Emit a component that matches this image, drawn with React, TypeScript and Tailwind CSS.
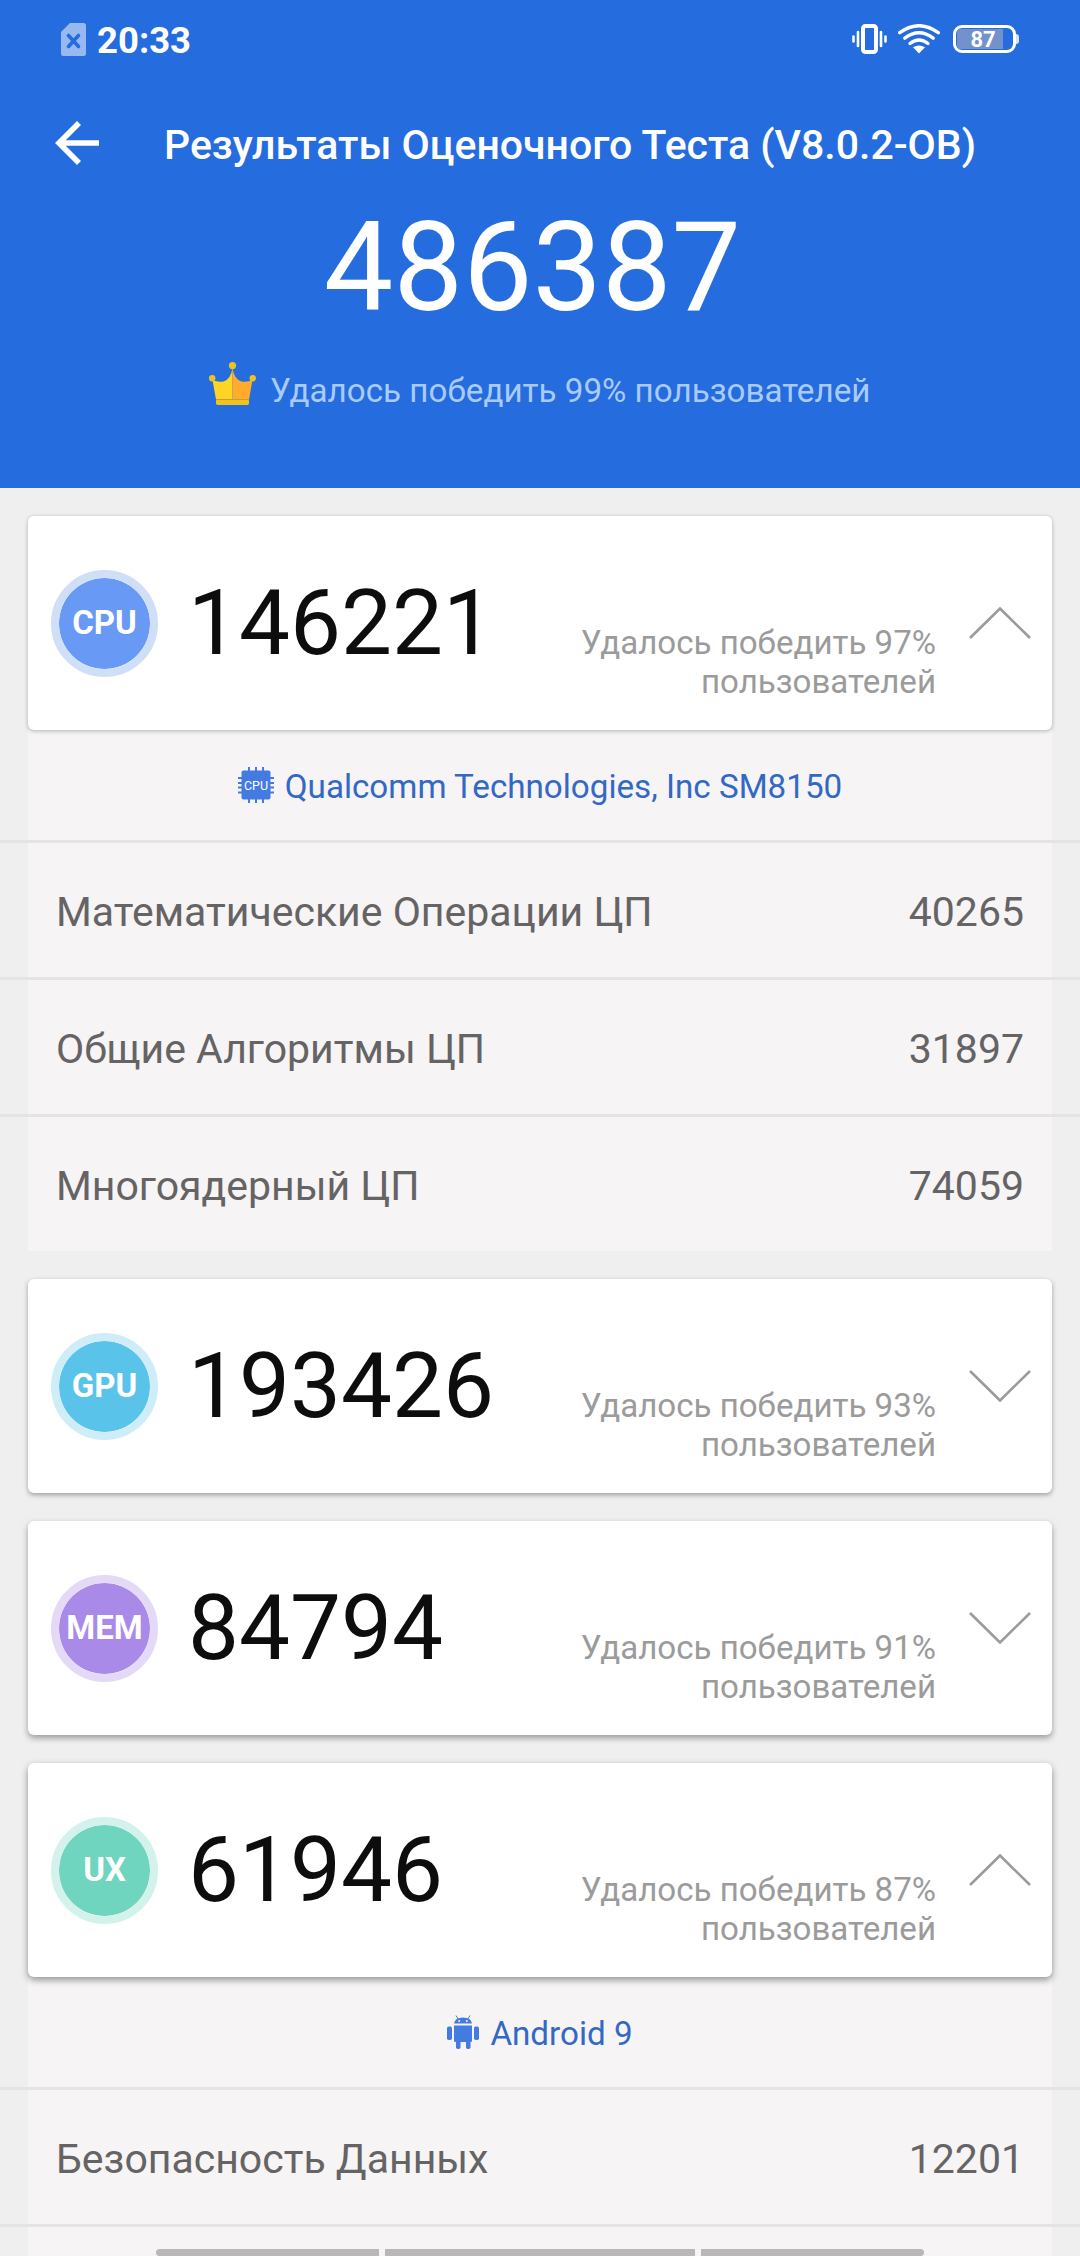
import React from "react";
import clsx from "clsx";

type Section = {
  name: string;
  score: string;
  percent: number;
  open: boolean;
  badge: string;
  shadow: string;
  device?: { icon: React.ReactNode; label: string };
  rows?: { label: string; value: string }[];
};

const sections: Section[] = [
  {
    name: "CPU",
    score: "146221",
    percent: 97,
    open: true,
    badge: "bg-[#6799f5] border-[#d0dff8]",
    shadow: "shadow-[0_1px_4px_rgba(0,0,0,0.28)]",
    device: { icon: <ChipIcon />, label: "Qualcomm Technologies, Inc SM8150" },
    rows: [
      { label: "Математические Операции ЦП", value: "40265" },
      { label: "Общие Алгоритмы ЦП", value: "31897" },
      { label: "Многоядерный ЦП", value: "74059" },
    ],
  },
  {
    name: "GPU",
    score: "193426",
    percent: 93,
    open: false,
    badge: "bg-[#5ac3ea] border-[#ceedf8]",
    shadow: "shadow-[0_2px_5px_rgba(0,0,0,0.34)]",
  },
  {
    name: "MEM",
    score: "84794",
    percent: 91,
    open: false,
    badge: "bg-[#a98ae8] border-[#e4daf8]",
    shadow: "shadow-[0_3px_6px_rgba(0,0,0,0.36)]",
  },
  {
    name: "UX",
    score: "61946",
    percent: 87,
    open: true,
    badge: "bg-[#6fd5be] border-[#d3f2eb]",
    shadow: "shadow-[0_3px_7px_rgba(0,0,0,0.4)]",
    device: { icon: <AndroidIcon />, label: "Android 9" },
    rows: [
      { label: "Безопасность Данных", value: "12201" },
      { label: "", value: "" },
    ],
  },
];

export default function App() {
  return (
    <div className="relative h-[2256px] w-[1080px] overflow-hidden bg-[#efefef] font-['Roboto',sans-serif]">
      <header className="h-[488px] bg-[#256cdf] text-white">
        <StatusBar />

        <div className="flex h-[130px] items-center pl-[55px]">
          <svg className="h-11 w-11 shrink-0" viewBox="0 0 44 44" fill="none" stroke="white" strokeWidth="5.6">
            <path d="M44 22H4M24 2L4 22l20 20" />
          </svg>
          <h1 className="ml-[65px] pt-1 text-[41px] leading-[48px] font-medium whitespace-nowrap">
            Результаты Оценочного Теста (V8.0.2-OB)
          </h1>
        </div>

        <div className="-ml-[15px] pt-[2px] text-center text-[123.75px] leading-[116px]">486387</div>

        <div className="mt-[36px] flex items-start pl-[209px]">
          <CrownIcon />
          <p className="ml-[14px] pt-[9px] text-[33.2px] leading-[39px] whitespace-nowrap text-[#a9cbfb]">
            Удалось победить 99% пользователей
          </p>
        </div>
      </header>

      <main className="flex flex-col gap-7 pt-7">
        {sections.map((s) => (
          <section key={s.name}>
            <ScoreCard section={s} />
            {s.device && (
              <div className="bg-[linear-gradient(to_right,transparent_28px,#f6f4f5_28px,#f6f4f5_1052px,transparent_1052px)]">
                <div className="flex h-[110px] items-center justify-center text-[33.2px] leading-[39px] text-[#3369c4]">
                  {s.device.icon}
                  <span className="ml-[11px] pt-[3px] whitespace-nowrap">{s.device.label}</span>
                </div>
                {s.rows?.map((row, i) => (
                  <div
                    key={i}
                    className="flex h-[137px] items-center justify-between border-t-[3px] border-[#e5e4e4] px-14 pt-1 text-[41px] leading-[48px] text-[#656364]"
                  >
                    <span>{row.label}</span>
                    <span>{row.value}</span>
                  </div>
                ))}
              </div>
            )}
          </section>
        ))}
      </main>

      {/* gesture bar */}
      <div className="absolute bottom-0 left-[156px] flex h-[7px] w-[768px] gap-[6px]">
        <span className="w-[223px] rounded-l-[4px] bg-[#b8b8b8]" />
        <span className="w-[310px] bg-[#b8b8b8]" />
        <span className="w-[223px] rounded-r-[4px] bg-[#b8b8b8]" />
      </div>
    </div>
  );
}

function ScoreCard({ section }: { section: Section }) {
  return (
    <div className={clsx("relative mx-7 flex h-[214px] items-center rounded-[6px] bg-white", section.shadow)}>
      <div
        className={clsx(
          "ml-[23px] flex h-[107px] w-[107px] shrink-0 items-center justify-center rounded-full border-8 bg-clip-padding text-[33px] font-bold text-white",
          section.badge
        )}
      >
        {section.name}
      </div>
      <div className="ml-[30px] text-[90.75px] leading-[106px] text-[#0d0d0d]">{section.score}</div>
      <p className="mt-[77px] ml-auto text-right text-[33.1px] leading-[39px] text-[#9b9b9b]">
        Удалось победить {section.percent}%
        <br />
        пользователей
      </p>
      <svg
        className={clsx("mr-[21px] ml-[33px] h-8 w-[62px]", !section.open && "rotate-180")}
        viewBox="0 0 62 32"
        fill="none"
        stroke="#9b9b9b"
        strokeWidth="2.6"
      >
        <path d="M1 31L31 1.5L61 31" />
      </svg>
    </div>
  );
}

function StatusBar() {
  return (
    <div className="flex h-[78px] items-center pr-[61px] pl-[61px]">
      {/* no SIM */}
      <svg className="h-[33px] w-[25px]" viewBox="0 0 25 33">
        <path d="M9 0H22.5Q25 0 25 2.5V30.5Q25 33 22.5 33H2.5Q0 33 0 30.5V9Z" fill="#98b9f0" />
        <path d="M7.5 12.5l10 11M17.5 12.5l-10 11" stroke="#256cdf" strokeWidth="3.6" strokeLinecap="round" />
      </svg>
      <span className="ml-[11px] pt-[3px] text-[36.5px] leading-[42px] font-bold">20:33</span>

      <div className="ml-auto flex items-center">
        {/* vibrate */}
        <svg className="h-[30px] w-[35px]" viewBox="0 0 35 30" fill="none" stroke="white">
          <rect x="11" y="2" width="13" height="26" rx="2.5" strokeWidth="4" />
          <path d="M6 8v14M29 8v14" strokeWidth="2.6" strokeLinecap="round" />
          <path d="M1.5 12.5v5M33.5 12.5v5" strokeWidth="2.6" strokeLinecap="round" />
        </svg>
        {/* wifi */}
        <svg className="ml-[11px] h-[30px] w-[42px]" viewBox="0 0 42 30" fill="none" stroke="white" strokeWidth="3.4" strokeLinecap="round">
          <path d="M1.7 8.7Q21-5.3 40.3 8.7" />
          <path d="M6.8 14.2Q21 3.3 35.2 14.2" />
          <path d="M12 19.5Q21 12.5 30 19.5" />
          <path d="M15 23.2Q21 19.6 27 23.2L21 29.6Z" fill="white" stroke="none" />
        </svg>
        {/* battery */}
        <div className="ml-[13px] flex items-center">
          <div className="relative flex h-7 w-[63px] items-center justify-center rounded-[9px] border-[3px] border-white">
            <div className="absolute top-[1px] bottom-[1px] left-[1px] w-[46px] rounded-l-[4px] bg-[#7391cb]" />
            <span className="relative -ml-[3px] pt-[2px] text-[22px] leading-[22px] font-bold">87</span>
          </div>
          <div className="h-[10px] w-[3px] rounded-r-[3px] bg-[#d5e3fa]" />
        </div>
      </div>
    </div>
  );
}

function CrownIcon() {
  return (
    <svg className="h-[43px] w-[47px] shrink-0" viewBox="0 0 47 43">
      <path d="M3.5 18Q9 20.500 14.500 19.500Q22 17 23.500 6V37.500H7Z" fill="#ffd524" />
      <path d="M43.5 18Q38 20.500 32.500 19.500Q25 17 23.500 6V37.500H40Z" fill="#ffab2b" />
      <rect x="7" y="37" width="33" height="6" rx="1.8" fill="#f0c41b" />
      <path d="M7 37.5H40" stroke="#c9a02c" strokeWidth="1" />
      <circle cx="23.5" cy="3.6" r="3.6" fill="#efc31f" />
      <circle cx="3.2" cy="16.3" r="3.2" fill="#efc31f" />
      <circle cx="43.8" cy="16.3" r="3.2" fill="#efc31f" />
    </svg>
  );
}

function ChipIcon() {
  return (
    <svg className="h-9 w-9" viewBox="0 0 36 36">
      <rect x="3.5" y="3.5" width="29" height="29" rx="2" fill="#447be0" />
      <path d="M11 0v36M18 0v36M25 0v36M0 11h36M0 16h36M0 20.5h36M0 25.5h36" stroke="#447be0" strokeWidth="2" />
      <text x="18" y="22.8" fill="white" fontSize="12.5" textAnchor="middle" fontFamily="Roboto, sans-serif">
        CPU
      </text>
    </svg>
  );
}

function AndroidIcon() {
  return (
    <svg className="h-[34px] w-8" viewBox="0 0 32 34" fill="#447be0">
      <path d="M7 8.5Q8 2.5 16 2.5T25 8.5Z" />
      <path d="M9 0.5l2.5 4M23 0.5l-2.5 4" stroke="#447be0" strokeWidth="1" />
      <circle cx="12.2" cy="6" r="1" fill="#f6f4f5" />
      <circle cx="19.8" cy="6" r="1" fill="#f6f4f5" />
      <path d="M7 10.5H25V25.5Q25 27 23.5 27H8.5Q7 27 7 25.5Z" />
      <rect x="0" y="11.5" width="5" height="13.5" rx="1.8" />
      <rect x="27" y="11.5" width="5" height="13.5" rx="1.8" />
      <rect x="9" y="25" width="4.5" height="9" rx="1.8" />
      <rect x="19" y="25" width="4.5" height="9" rx="1.8" />
    </svg>
  );
}
